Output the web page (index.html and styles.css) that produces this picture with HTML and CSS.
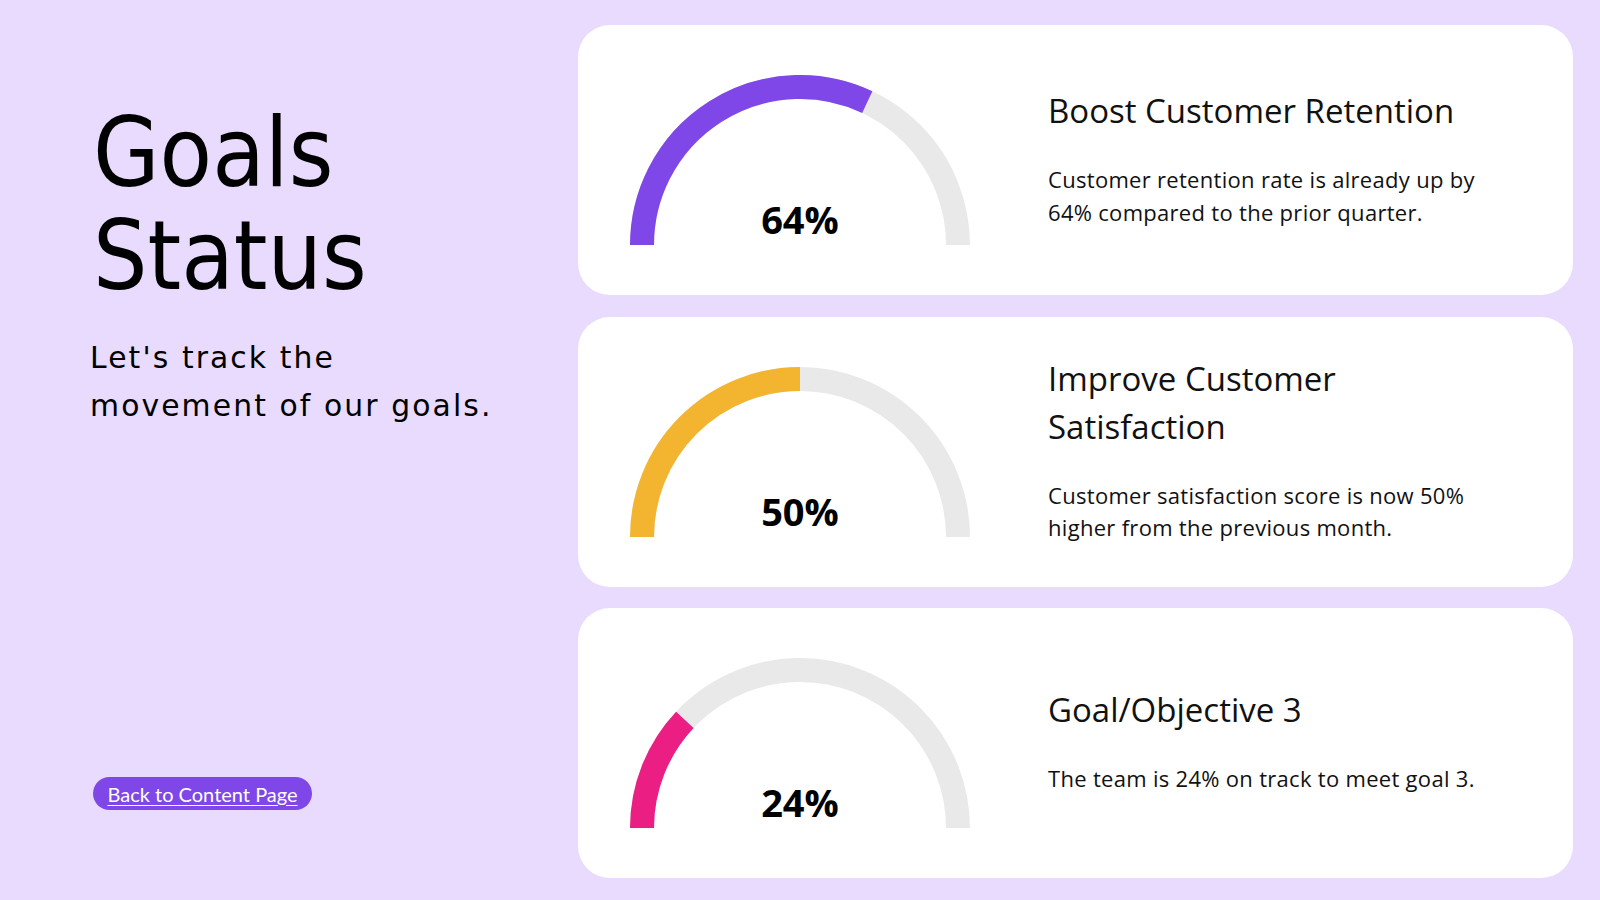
FILE: index.html
```html
<!DOCTYPE html>
<html lang="en">
<head>
<meta charset="utf-8">
<title>Goals Status</title>
<link rel="stylesheet" href="styles.css">
</head>
<body>
<main class="slide">
  <section class="intro">
    <h1 class="intro-title">Goals<br>Status</h1>
    <p class="intro-sub">Let's track the<br>movement of our goals.</p>
    <a class="back-btn" href="#">Back to Content Page</a>
  </section>
  <section class="goals">
    <article class="goal-card">
      <div class="gauge">
        <svg class="gauge-svg" viewBox="0 0 340 170" width="340" height="170">
          <path class="gauge-track" d="M 12 170 A 158 158 0 0 1 328 170"/>
          <path class="gauge-fill fill-purple" d="M 12 170 A 158 158 0 0 1 237.28 27.04"/>
        </svg>
        <span class="gauge-value">64%</span>
      </div>
      <div class="goal-text">
        <h2 class="goal-title">Boost Customer Retention</h2>
        <p class="goal-desc">Customer retention rate is already up by 64% compared to the prior quarter.</p>
      </div>
    </article>
    <article class="goal-card">
      <div class="gauge">
        <svg class="gauge-svg" viewBox="0 0 340 170" width="340" height="170">
          <path class="gauge-track" d="M 12 170 A 158 158 0 0 1 328 170"/>
          <path class="gauge-fill fill-yellow" d="M 12 170 A 158 158 0 0 1 170 12"/>
        </svg>
        <span class="gauge-value">50%</span>
      </div>
      <div class="goal-text">
        <h2 class="goal-title">Improve Customer Satisfaction</h2>
        <p class="goal-desc">Customer satisfaction score is now 50% higher from the previous month.</p>
      </div>
    </article>
    <article class="goal-card">
      <div class="gauge">
        <svg class="gauge-svg" viewBox="0 0 340 170" width="340" height="170">
          <path class="gauge-track" d="M 12 170 A 158 158 0 0 1 328 170"/>
          <path class="gauge-fill fill-pink" d="M 12 170 A 158 158 0 0 1 54.82 61.85"/>
        </svg>
        <span class="gauge-value">24%</span>
      </div>
      <div class="goal-text">
        <h2 class="goal-title">Goal/Objective 3</h2>
        <p class="goal-desc">The team is 24% on track to meet goal 3.</p>
      </div>
    </article>
  </section>
</main>
</body>
</html>
```

FILE: styles.css
```css
* { box-sizing: border-box; }

html, body {
  margin: 0;
  padding: 0;
}

body {
  width: 1600px;
  height: 900px;
  overflow: hidden;
  background: #e9dbfd;
  font-family: "Open Sans", "Lato", sans-serif;
  color: #111;
}

.slide {
  display: flex;
  height: 900px;
}

.intro {
  width: 578px;
  flex: none;
  display: flex;
  flex-direction: column;
  align-items: flex-start;
  padding: 102px 0 90px 93px;
}

.intro-title {
  margin: 0;
  font-family: "DejaVu Sans Condensed", "DejaVu Sans", sans-serif;
  font-stretch: condensed;
  font-weight: 400;
  font-size: 95.5px;
  line-height: 103.4px;
  color: #000;
}

.intro-sub {
  margin: 25px 0 0 -3px;
  font-family: "DejaVu Sans", sans-serif;
  font-size: 29.8px;
  line-height: 48.3px;
  letter-spacing: 2.1px;
  color: #000;
}

.back-btn {
  margin-top: auto;
  display: inline-block;
  padding: 4.5px 14.5px 4.5px;
  border-radius: 999px;
  background: #7f47e8;
  color: #fff;
  font-family: "Lato", "Open Sans", sans-serif;
  font-size: 20px;
  line-height: 24px;
  text-decoration: underline;
  text-decoration-thickness: 1px;
  text-underline-offset: 3px;
}

.goals {
  display: flex;
  flex-direction: column;
  gap: 21.6px;
  padding-top: 25px;
  width: 995px;
}

.goal-card {
  height: 270px;
  background: #fff;
  border-radius: 32px;
  display: flex;
  align-items: center;
  padding-left: 52px;
}

.gauge {
  position: relative;
  width: 340px;
  height: 170px;
  flex: none;
}

.gauge-svg {
  display: block;
}

.gauge-track,
.gauge-fill {
  fill: none;
  stroke-width: 24;
  stroke-linecap: butt;
}

.gauge-track { stroke: #e9e9e9; }
.fill-purple { stroke: #7f47e8; }
.fill-yellow { stroke: #f3b52f; }
.fill-pink { stroke: #ea1e83; }

.gauge-value {
  position: absolute;
  left: 0;
  right: 0;
  bottom: 3px;
  text-align: center;
  font-weight: 700;
  font-size: 38px;
  line-height: 46px;
  color: #000;
}

.goal-text {
  margin-left: 78px;
  margin-bottom: 5px;
  width: 455px;
}

.goal-title {
  margin: 0;
  font-weight: 400;
  font-size: 33px;
  line-height: 48px;
  color: #111;
}

.goal-desc {
  margin: 28px 0 0;
  font-size: 22px;
  line-height: 32.5px;
  letter-spacing: 0.3px;
  color: #111;
}
```
